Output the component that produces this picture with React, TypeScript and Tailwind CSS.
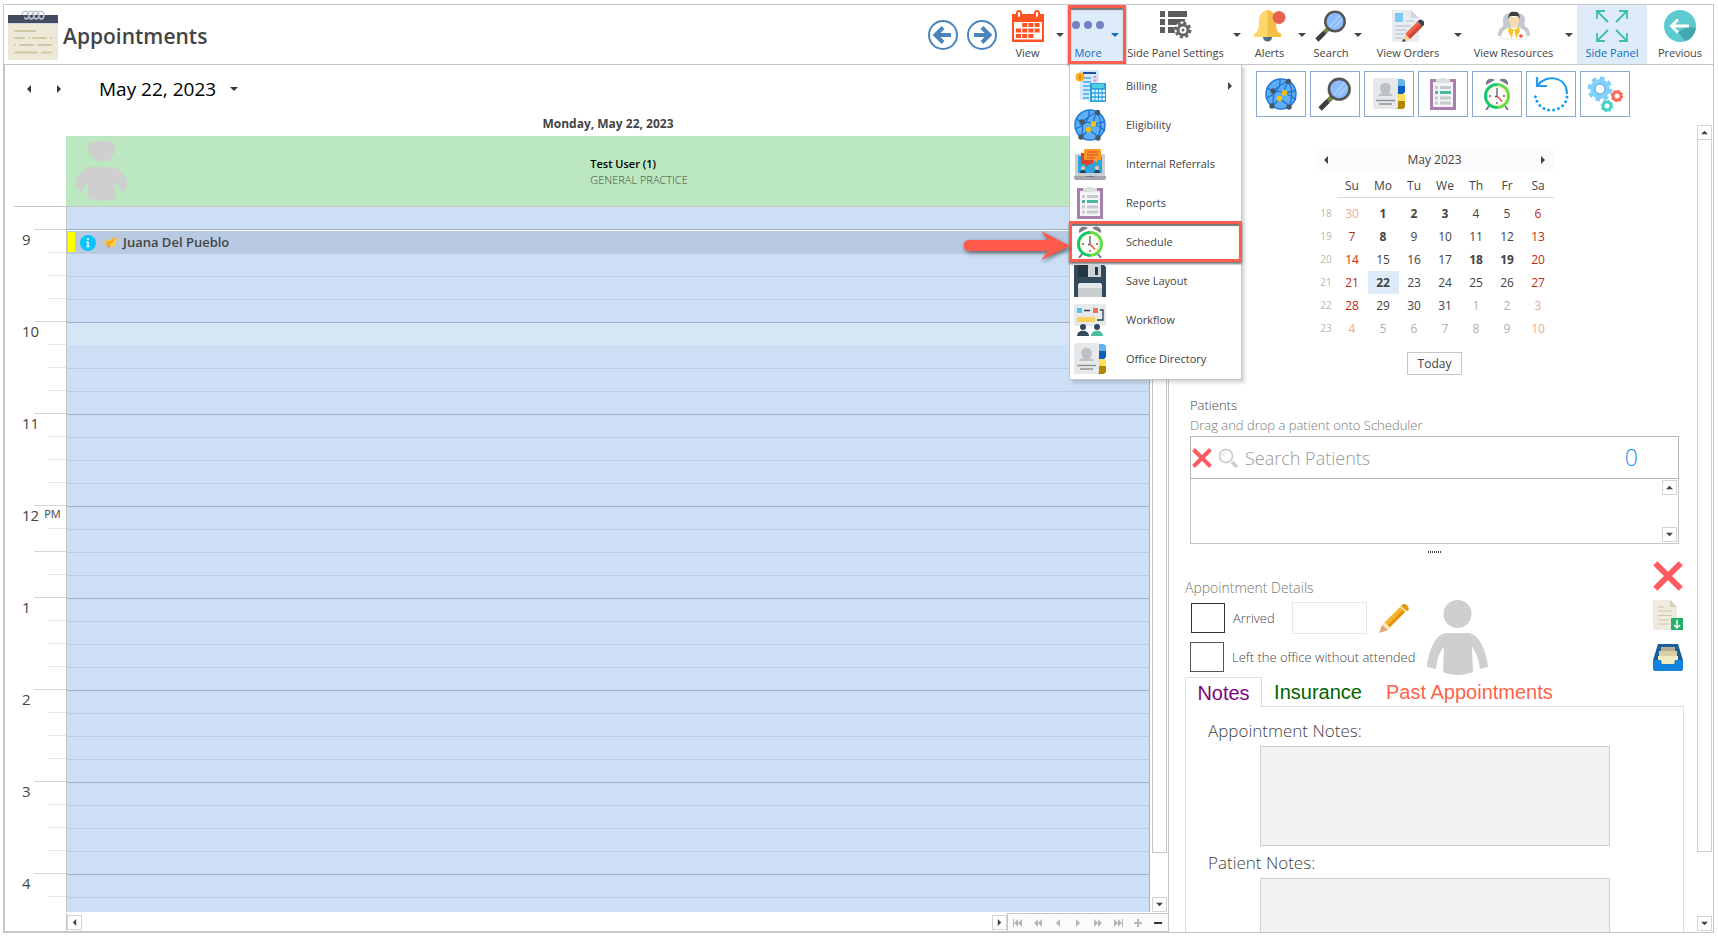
import type { ReactNode } from "react";
import clsx from "clsx";

type Dir = "up" | "down" | "left" | "right";

const ARROWS: Record<Dir, string> = {
  up: "M0 6L4 2l4 4z",
  down: "M0 2h8L4 6z",
  left: "M6 0v8L2 4z",
  right: "M2 0l4 4-4 4z",
};

const Arrow = ({ dir, className = "" }: { dir: Dir; className?: string }) => (
  <svg
    viewBox="0 0 8 8"
    className={clsx("size-2 shrink-0", className)}
    fill="currentColor"
    aria-hidden="true"
  >
    <path d={ARROWS[dir]} />
  </svg>
);

const Svg = ({
  children,
  className = "size-8",
  box = "0 0 32 32",
}: {
  children: ReactNode;
  className?: string;
  box?: string;
}) => (
  <svg
    viewBox={box}
    className={clsx("shrink-0", className)}
    fill="none"
    aria-hidden="true"
  >
    {children}
  </svg>
);

/* ---------- icons ---------- */

const NotepadIcon = () => (
  <Svg className="h-[50px] w-[50px]" box="0 0 50 50">
    <path fill="#ece9d8" d="M0 5h50v45H0z" />
    <path fill="#434c63" d="M0 5h50v8H0z" />
    <path fill="#d8d8dc" d="M0 13h50v1H0z" />
    <g stroke="#c3c8cf" strokeWidth="1.5">
      <path d="M14 5c0-5 7-5 7 0 0 5-5 5-4 2M19 5c0-5 7-5 7 0 0 5-5 5-4 2M24 5c0-5 7-5 7 0 0 5-5 5-4 2M29 5c0-5 7-5 7 0 0 5-5 5-4 2" />
    </g>
    <path
      stroke="#d1c9a5"
      strokeWidth="2"
      strokeLinecap="round"
      d="M7 21h20M7 28h9M21 28h0M25 28h13M43 28h0M7 35h0M12 35h13M30 35h13M7 42.500h22M34 42.500h9"
    />
  </Svg>
);

const CircleArrowIcon = ({ flip }: { flip?: boolean }) => (
  <Svg className={clsx("size-[30px]", flip && "rotate-180")} box="0 0 30 30">
    <circle cx="15" cy="15" r="14" stroke="#4a84bd" strokeWidth="2" />
    <path
      d="M23 15H8M15 7.500L7.500 15l7.500 7.500"
      stroke="#4a84bd"
      strokeWidth="4"
    />
  </Svg>
);

const CalendarIcon = () => (
  <Svg>
    <path fill="#ff5323" d="M0 4h32v28H0z" />
    <path fill="#fff" d="M2 12h28v17.500H2z" />
    <g fill="#fff" stroke="#ff5323" strokeWidth="2">
      <rect x="5" y="1" width="4" height="7" rx="2" />
      <rect x="23" y="1" width="4" height="7" rx="2" />
    </g>
    <path
      stroke="#ff5323"
      strokeWidth="4"
      strokeDasharray="5 1.200"
      d="M10.200 15H28M4 20.500h24M4 26h17.400"
    />
  </Svg>
);

const DotsIcon = () => (
  <Svg>
    <g fill="#7482c3">
      <circle cx="4" cy="15" r="4" />
      <circle cx="16" cy="15" r="4" />
      <circle cx="28" cy="15" r="4" />
    </g>
  </Svg>
);

const ListGearIcon = () => (
  <Svg>
    <path
      fill="#5c5c5c"
      d="M0 1h5v6H0zM8 1h19v6H8zM0 9h5v6H0zM8 9h17v6H8zM0 17h5v6H0zM8 17h9v6H8z"
    />
    <circle cx="23" cy="20" r="8.500" fill="#fff" />
    <circle
      cx="23"
      cy="20"
      r="7"
      stroke="#666"
      strokeWidth="3"
      strokeDasharray="3 2.500"
    />
    <circle cx="23" cy="20" r="5" stroke="#666" strokeWidth="3" />
    <circle cx="23" cy="20" r="1.500" fill="#666" />
  </Svg>
);

const BellIcon = () => (
  <Svg>
    <path fill="#4f6d84" d="M9 27h9c0 6-9 6-9 0z" />
    <path
      fill="#ffd66b"
      d="M11 1c1-1.500 4-1.500 5 0 5 2 6 6 6 11 0 7 1 10 5 12v3H0v-3c4-2 5-5 5-12 0-5 1-9 6-11z"
    />
    <path
      fill="#f5bf45"
      d="M13.500 0c1 0 2 .3 2.500 1 5 2 6 6 6 11 0 7 1 10 5 12v3H13.500z"
    />
    <circle cx="25" cy="7.500" r="6.500" fill="#e8614f" />
  </Svg>
);

const SearchIcon = ({ className }: { className?: string }) => (
  <Svg className={className}>
    <path d="M14 18L2 30" stroke="#505050" strokeWidth="4" />
    <path d="M13 19l-3 3" stroke="#6f8f3c" strokeWidth="4" />
    <path d="M2 30l7-7" stroke="#3e3e3e" strokeWidth="4.500" />
    <circle
      cx="20"
      cy="11.500"
      r="9.700"
      fill="#8cbcfb"
      stroke="#555"
      strokeWidth="2.500"
    />
    <path d="M15 17L25 5M19 18l8-9" stroke="#abd0ff" strokeWidth="1.500" />
  </Svg>
);

const OrdersIcon = () => (
  <Svg>
    <path fill="#e9edf1" d="M0 0h19l8 8v24H0z" />
    <path fill="#cfd8e0" d="M19 0l8 8h-8z" />
    <path fill="#7bc8f5" d="M3 3h8v9H3z" />
    <path
      stroke="#c3ced8"
      strokeWidth="1.500"
      d="M14 11h8M3 16h16M3 20h12M3 24h9M3 28h7"
    />
    <path fill="#f1644b" d="M25.500 11.500l5 5L18 29l-5-5z" />
    <path fill="#d24a35" d="M28 14l2.500 2.500L18 29l-2.500-2.500z" />
    <path fill="#3c4450" d="M27 10c2-2 7 2 5 5l-1.500 1.500-5-5z" />
    <path fill="#f6cfa3" d="M13 24l5 5-7 3z" />
    <path fill="#3c4450" d="M11.500 28.500l2.500 2.500-4 1z" />
  </Svg>
);

const ResourcesIcon = () => (
  <Svg>
    <g fill="#c3c9ce">
      <path d="M6 6c6-6 9 0 8 6l-1 5H5c1-4-1-8 1-11zM26 6c-6-6-9 0-8 6l1 5h8c-1-4 1-8-1-11z" />
      <path d="M0 26c0-8 5-11 10-10l3 10zM32 26c0-8-5-11-10-10l-3 10z" />
    </g>
    <path fill="#fff" stroke="#e4e7ea" d="M3 29c0-9 6-12 13-12s13 3 13 12z" />
    <path fill="#f7c52d" d="M11 17l5 3 5-3 1 4-4 8h-4l-4-8z" />
    <path fill="#fff" d="M15.300 21h1.400l1.500 8h-4.400z" />
    <path fill="#f9d9b0" d="M11 7h10c0 7-2 11-5 11S11 14 11 7z" />
    <path fill="#3d3d42" d="M10.500 9C10 3 13 1 16 2c4-1 6 2 5.500 7L20 6h-8z" />
    <path d="M23 24v4M21 26h4" stroke="#e8563f" strokeWidth="1.300" />
  </Svg>
);

const ExpandIcon = () => (
  <Svg>
    <path
      stroke="#41bfa5"
      strokeWidth="1.800"
      d="M1 9V1h8M1 1l11 11M23 1h8v8M31 1L20 12M1 23v8h8M1 31l11-11M31 23v8h-8M31 31L20 20"
    />
  </Svg>
);

const PreviousIcon = () => (
  <Svg>
    <circle cx="16" cy="16" r="16" fill="#5dcad1" />
    <path fill="#42a8ae" d="M14 22l9-5 9 1c-1 6-5 12-11 13z" />
    <path
      d="M25 16H8M14 9.500L7.500 16l6.500 6.500"
      stroke="#fff"
      strokeWidth="3"
    />
  </Svg>
);

const BillingIcon = () => (
  <Svg>
    <path fill="#d6e8fc" d="M6 0h19v30H6z" />
    <path fill="#27509b" d="M9 2h13v2H9z" />
    <path
      stroke="#5fbcf5"
      strokeWidth="2"
      d="M9 8h8M9 12h8M9 16h8M9 20h8M9 24h6M9 28h6"
    />
    <path stroke="#f68aa8" strokeWidth="3" strokeDasharray="2 1.500" d="M21 6v9" />
    <circle cx="6" cy="7" r="4.500" fill="#fbaf1b" />
    <path d="M6 4.500v5" stroke="#d97908" strokeWidth="1.500" />
    <path fill="#2b9fe0" d="M16 13h16v19H16z" />
    <path fill="#4fd0e0" d="M18 14h12v4H18z" />
    <path
      stroke="#e6f6ff"
      strokeWidth="2.500"
      strokeDasharray="2.500 1"
      d="M18 21h13M18 25h13M18 29h13"
    />
  </Svg>
);

const GlobeIcon = () => (
  <Svg>
    <circle cx="16" cy="16" r="15" fill="#5daef5" stroke="#2579d8" strokeWidth="1.500" />
    <path
      stroke="#1b6dcc"
      strokeWidth="1.200"
      d="M23 3C20 4 18 5 8 13M15 1c1 9-3 15-14 19M23 3c6 9 4 18 1 26M8 13c1 8 1 11-1 15M8 13c8 0 16 2 23 9M14.500 20.500C12 24 10 26 7 28M14.500 20.500c4 3 7 4 9.500 8M19.500 15c0-5 1-8 4-12M19.500 15c5-1 9-1 11-3M2 10l6 3"
    />
    <g fill="#455a64">
      <circle cx="23.500" cy="3.500" r="2.700" />
      <circle cx="8" cy="13" r="2.700" />
      <circle cx="7" cy="28" r="2.700" />
      <circle cx="24" cy="29" r="2.700" />
    </g>
    <circle cx="19.500" cy="15" r="2.700" fill="#ffc107" />
    <circle cx="14.500" cy="20.500" r="2.700" fill="#ffc107" />
  </Svg>
);

const ReferralsIcon = () => (
  <Svg>
    <path fill="#c9ced2" d="M1 6h30v22H1z" />
    <path fill="#2fa3dc" d="M4 8h24v17H4z" />
    <path fill="#a3a7ab" d="M0 28h32v2c0 1-1 2-2 2H2c-1 0-2-1-2-2z" />
    <path fill="#74797d" d="M12 28h8v1h-8z" />
    <path fill="#1d3f63" d="M6 25c0-4 6-4 6 0zM20 25c0-4 6-4 6 0z" />
    <circle cx="9" cy="20" r="2" fill="#f6c79a" />
    <circle cx="23" cy="20" r="2" fill="#f6c79a" />
    <path fill="#d8442e" d="M7 5h12v11h-4l-2 3-2-3H7z" />
    <path fill="#fd9727" d="M11 1h15c1 0 1 1 1 1v10h-3l-1 3-3-3h-9s-1 0-1-1V2z" />
    <path stroke="#d8442e" strokeWidth="1.200" d="M13 4h11M13 7h11M13 10h8" />
  </Svg>
);

const ReportsIcon = () => (
  <Svg>
    <path fill="#a97fad" d="M3 1h26v31H3z" />
    <path fill="#f3f5f5" d="M6 4h20v25H6z" />
    <path fill="#dadfe0" d="M9 1h4V0h6v1h4v4H9z" />
    <path stroke="#c4cacd" strokeWidth="3" d="M8 9.500h3M13 9.500h11M8 20h3M13 20h11M8 25h3M13 25h11" />
    <path stroke="#4db6a0" strokeWidth="3" d="M8 14.500h3M13 14.500h11" />
  </Svg>
);

const ClockIcon = () => (
  <Svg>
    <path fill="#7d7b8c" d="M5 7C4 2 9-1 14 2zM27 7c1-5-4-8-9-5z" />
    <path d="M8 28l-3 4M24 28l3 4" stroke="#77758a" strokeWidth="2" />
    <circle cx="16" cy="18" r="11.500" fill="#fff" />
    <path d="M16 6.500a11.500 11.500 0 000 23" stroke="#0cc872" strokeWidth="3" />
    <path d="M16 6.500a11.500 11.500 0 010 23" stroke="#5fde4a" strokeWidth="3" />
    <circle cx="16" cy="18" r="9.500" stroke="#fde9b8" strokeWidth="1.200" />
    <path
      d="M16 10v2M16 24v2M8 18h2M22 18h2M16 12v6.500h-2"
      stroke="#5b5b6e"
      strokeWidth="1.300"
    />
    <path d="M16 18l5 5.500" stroke="#f0533a" strokeWidth="1.600" />
  </Svg>
);

const FloppyIcon = () => (
  <Svg>
    <path fill="#324a5b" d="M0 0h30l2 2v30H0z" />
    <path fill="#243642" d="M4 0h10v12H4z" />
    <path fill="#ccd1d5" d="M14 0h13v12H14z" />
    <path fill="#243642" d="M21 2h3v8h-3z" />
    <path fill="#e4e7e7" d="M4 20l1-2h22l1 2v5H4z" />
    <path fill="#c8cdcf" d="M4 23h24v9H4z" />
  </Svg>
);

const WorkflowIcon = () => (
  <Svg>
    <rect width="32" height="22" rx="2" fill="#e6e9ea" />
    <path fill="#54c0eb" d="M3 4h5v5H3z" />
    <path fill="#f1705d" d="M19 4h5v5h-5z" />
    <path fill="#ffd05b" d="M3 13h18v5H3z" />
    <path d="M10 6.500h6M26 6h3v10h-6" stroke="#2d4456" strokeWidth="1.300" />
    <circle cx="9" cy="23" r="3" fill="#324a5e" />
    <circle cx="23" cy="23" r="3" fill="#324a5e" />
    <path fill="#324a5e" d="M3 32c0-7 12-7 12 0z" />
    <path fill="#4cbea0" d="M17 32c0-7 12-7 12 0z" />
  </Svg>
);

const DirectoryIcon = () => (
  <Svg>
    <path fill="#64b5e6" d="M24 1h6l2 2v5h-8z" />
    <path fill="#0a5fbf" d="M24 8h8v6l-2 2h-6z" />
    <path fill="#ffdf57" d="M24 16h8v6l-2 1h-6z" />
    <path fill="#b38600" d="M24 23h8v6l-2 2h-6z" />
    <rect width="25" height="31" rx="2" fill="#e7e8e9" />
    <path
      fill="#bdc1c5"
      d="M12.500 5c7 0 6 7 3 10 3 1 4 1 4 3h-14c0-2 1-2 4-3-3-3-4-10 3-10z"
    />
    <path d="M3 22.500h19M6 26h13" stroke="#8e959a" strokeWidth="1.600" />
  </Svg>
);

const RefreshIcon = () => (
  <Svg className="size-9" box="0 0 36 36">
    <path d="M5 9C13-2 34 0 34 18" stroke="#1e9bf0" strokeWidth="2" />
    <path d="M4 1v9h10" stroke="#1e9bf0" strokeWidth="2.200" />
    <path
      d="M34 21C32 38 4 40 2 18"
      stroke="#12a0f5"
      strokeWidth="3"
      strokeLinecap="round"
      strokeDasharray="0 5"
    />
  </Svg>
);

const GearsIcon = () => (
  <Svg className="size-9" box="0 0 36 36">
    <circle cx="13" cy="13" r="10.500" stroke="#7dcdfa" strokeWidth="4" strokeDasharray="4.500 3.700" />
    <circle cx="13" cy="13" r="7.500" stroke="#83d2fd" strokeWidth="5" />
    <circle cx="13" cy="13" r="5" stroke="#3ca4e3" />
    <circle cx="30" cy="20" r="4" stroke="#fb6a56" strokeWidth="3" />
    <circle cx="30" cy="20" r="5.500" stroke="#fb6a56" strokeWidth="1.500" strokeDasharray="2 2.300" />
    <circle cx="20" cy="30" r="4" stroke="#47d3c3" strokeWidth="3" />
    <circle cx="20" cy="30" r="5.500" stroke="#47d3c3" strokeWidth="1.500" strokeDasharray="2 2.300" />
  </Svg>
);

const CrossIcon = ({ className }: { className: string }) => (
  <Svg className={className} box="0 0 20 20">
    <path d="M1.500 1.500l17 17M18.500 1.500l-17 17" stroke="#ff5a5f" strokeWidth="4" />
  </Svg>
);

const LensIcon = () => (
  <Svg className="size-5" box="0 0 20 20">
    <circle cx="8" cy="8" r="6.500" stroke="#d0d0d0" strokeWidth="1.800" />
    <path d="M4.500 8c0-2 1-3 3-3.500" stroke="#ddd" />
    <path d="M14 14l5 5" stroke="#ccc" strokeWidth="3.500" />
  </Svg>
);

const PencilIcon = () => (
  <Svg className="size-[30px]" box="0 0 30 30">
    <path fill="#f5b52e" d="M22 3l5 5L9 26l-5-5z" />
    <path fill="#e09204" d="M25 6l2 2L9 26l-2-2z" />
    <path fill="#fbe9bd" d="M21 4l2-2 6 5-3 2z" />
    <path fill="#e09a0c" d="M23 2c2-3 8 1 6.500 5L28 8l-6-5z" />
    <path fill="#fbe9bd" d="M3 22l2-3 7 6-3 2z" />
    <path fill="#e3a376" d="M3 22l6 5-9 3z" />
  </Svg>
);

const DocumentIcon = () => (
  <Svg className="size-[30px]" box="0 0 30 30">
    <path fill="#efebde" d="M0 0h17l7 7v23H0z" />
    <path fill="#d8d1ba" d="M17 0l7 7h-7z" />
    <path
      stroke="#cdc6ad"
      strokeWidth="1.200"
      d="M5 7h6M5 11h14M5 15.500h14M5 20h11M5 24h11"
    />
    <path fill="#23b067" d="M18 18h12v12H18z" />
    <path d="M24 20v8M21 25l3 3 3-3" stroke="#fff" strokeWidth="1.500" />
  </Svg>
);

const TrayIcon = () => (
  <Svg className="h-[27px] w-[30px]" box="0 0 30 27">
    <path fill="#165f98" d="M5 0h20l5 16v2H0v-2z" />
    <path fill="#b7ad8b" d="M8 3h14v5H8z" />
    <path fill="#d9cfa5" d="M6 7h18v6H6z" />
    <path fill="#f1ebc0" d="M5 12h20v5H5z" />
    <path fill="#1583dc" d="M0 16h8l1 4h12l1-4h8v9c0 1-1 2-2 2H2c-1 0-2-1-2-2z" />
    <path fill="#f1ebc0" d="M8 15h14l-1 5H9z" />
  </Svg>
);

const InfoIcon = () => (
  <Svg className="size-4" box="0 0 16 16">
    <circle cx="8" cy="8" r="8" fill="#0ac5fb" />
    <path d="M8 6.500v5M6.500 7H8M6.500 11.500h3M8 3v2" stroke="#fff" strokeWidth="1.500" />
  </Svg>
);

const PlaneIcon = () => (
  <Svg className="h-3 w-4" box="0 0 16 12">
    <path fill="#fcc33c" d="M0 5L16 0 12 10z" />
    <path fill="#f2a71b" d="M4 6.500L16 0 6 12z" />
    <path fill="#ffce4a" d="M7 8l9-8-4 10z" />
  </Svg>
);

const PersonIcon = () => (
  <Svg className="h-[75px] w-[61px]" box="0 0 61 75">
    <circle cx="30.500" cy="14" r="14" fill="#cfcfcf" />
    <path
      fill="#cfcfcf"
      d="M20 33h21c11 0 19 20 20 34l-8 2c-1-9-4-17-8-22l1 25c-9 4-22 4-30 0l1-25c-5 5-7 13-8 22l-9-2C1 53 8 33 20 33z"
    />
  </Svg>
);

const ProviderIcon = () => (
  <Svg className="h-[60px] w-[53px]" box="0 0 53 60">
    <path
      fill="#cfcfcf"
      d="M13 3c6-4 22-4 27 0 1 11-5 18-13 18S12 14 13 3zM15 26h24c7 2 12 9 14 18l-5 8-8-12 1 16c-6 5-22 5-28 0V40L6 52l-6-8c2-9 8-16 15-18z"
    />
  </Svg>
);

/* ---------- data ---------- */

const menuItems = [
  { label: "Billing", icon: <BillingIcon />, submenu: true },
  { label: "Eligibility", icon: <GlobeIcon /> },
  { label: "Internal Referrals", icon: <ReferralsIcon /> },
  { label: "Reports", icon: <ReportsIcon /> },
  { label: "Schedule", icon: <ClockIcon />, marked: true },
  { label: "Save Layout", icon: <FloppyIcon /> },
  { label: "Workflow", icon: <WorkflowIcon /> },
  { label: "Office Directory", icon: <DirectoryIcon /> },
];

const quickTools = [
  { label: "Eligibility", icon: <GlobeIcon /> },
  { label: "Search", icon: <SearchIcon className="size-[34px]" /> },
  { label: "Office Directory", icon: <DirectoryIcon /> },
  { label: "Reports", icon: <ReportsIcon /> },
  { label: "Schedule", icon: <ClockIcon /> },
  { label: "Refresh", icon: <RefreshIcon /> },
  { label: "Settings", icon: <GearsIcon /> },
];

const weekDays = ["Su", "Mo", "Tu", "We", "Th", "Fr", "Sa"];
const boldDays = [1, 2, 3, 8, 18, 19, 22];
const weeks = [18, 19, 20, 21, 22, 23];

// April 30 is the first cell of the grid
const dayAt = (week: number, col: number) => {
  const n = week * 7 + col;
  if (n === 0) return { day: 30, current: false };
  if (n > 31) return { day: n - 31, current: false };
  return { day: n, current: true };
};

const hours = ["9", "10", "11", "12", "1", "2", "3", "4"];
const slots = Array.from({ length: 31 }, (_, i) => i);

/* ---------- header ---------- */

const ToolButton = ({
  label,
  icon,
  caret,
  className = "",
}: {
  label: string;
  icon: ReactNode;
  caret?: boolean;
  className?: string;
}) => (
  <button type="button" className={clsx("flex h-full items-center", className)}>
    <span className="flex h-full flex-1 flex-col items-center pt-[5px]">
      {icon}
      <span className="mt-[3px] text-[11px] leading-4 whitespace-nowrap">
        {label}
      </span>
    </span>
    {caret && <Arrow dir="down" className="mr-1" />}
  </button>
);

const MoreMenu = () => (
  <div
    role="menu"
    className="absolute top-[59px] left-px z-10 w-[173px] border border-[#c6c6c6] bg-white py-px shadow-[3px_3px_3px_rgba(0,0,0,0.15)]"
  >
    {menuItems.map((item) => (
      <div key={item.label} className="relative">
        <button
          type="button"
          role="menuitem"
          className="flex h-[39px] w-full items-center pr-[7px] pl-1 text-left text-[11px]"
        >
          {item.icon}
          <span className="ml-5 flex-1 pt-px">{item.label}</span>
          {item.submenu && <Arrow dir="right" />}
        </button>
        {item.marked && (
          <>
            <span className="pointer-events-none absolute -inset-x-px -inset-y-px border-[3px] border-[#fb5f50] shadow-[inset_0_2px_1px_#777,0_2px_2px_#777]" />
            <svg
              viewBox="0 0 106 32"
              className="absolute top-2 right-full h-8 w-[106px] drop-shadow-[1px_2px_2px_rgba(0,0,0,0.5)]"
              aria-hidden="true"
            >
              <path
                fill="#ff5a4b"
                d="M5 10h79L77 1l29 15-29 14 7-9H5c-7 0-7-11 0-11z"
              />
            </svg>
          </>
        )}
      </div>
    ))}
  </div>
);

const Header = () => (
  <header className="flex h-[60px] shrink-0 items-center border-b border-[#c6c6c6]">
    <div className="flex flex-1 items-center gap-[5px] pl-1">
      <NotepadIcon />
      <h1 className="pt-1 text-[21px] font-semibold">Appointments</h1>
    </div>
    <div className="flex h-full items-center">
      <div className="mr-[6px] flex gap-[9px]">
        <button type="button" aria-label="Back">
          <CircleArrowIcon />
        </button>
        <button type="button" aria-label="Forward">
          <CircleArrowIcon flip />
        </button>
      </div>
      <ToolButton
        label="View"
        icon={<CalendarIcon />}
        caret
        className="w-[65px] gap-1"
      />
      <div className="relative h-full w-[58px]">
        <button
          type="button"
          aria-haspopup="menu"
          aria-expanded="true"
          className="flex h-full w-full items-center border-[3px] border-[#fb5f50] bg-[#deebf8] pl-px text-[#0f6cbd] shadow-[inset_0_2px_1px_#777,0_2px_2px_#777]"
        >
          <span className="flex h-full flex-col items-center pt-[2px]">
            <DotsIcon />
            <span className="mt-[3px] text-[11px] leading-4">More</span>
          </span>
          <Arrow dir="down" className="ml-[7px]" />
        </button>
        <MoreMenu />
      </div>
      <ToolButton
        label="Side Panel Settings"
        icon={<ListGearIcon />}
        caret
        className="w-[119px] gap-2"
      />
      <ToolButton
        label="Alerts"
        icon={<BellIcon />}
        caret
        className="w-[65px] gap-1"
      />
      <ToolButton
        label="Search"
        icon={<SearchIcon />}
        caret
        className="w-14 gap-[2px]"
      />
      <ToolButton
        label="View Orders"
        icon={<OrdersIcon />}
        caret
        className="w-[100px] gap-1"
      />
      <ToolButton
        label="View Resources"
        icon={<ResourcesIcon />}
        caret
        className="w-[111px] gap-1"
      />
      <ToolButton
        label="Side Panel"
        icon={<ExpandIcon />}
        className="w-[70px] bg-[#deebf8] text-[#0f6cbd]"
      />
      <ToolButton label="Previous" icon={<PreviousIcon />} className="w-[66px]" />
    </div>
  </header>
);

/* ---------- scheduler ---------- */

const ScrollButton = ({ dir, label }: { dir: Dir; label: string }) => (
  <button
    type="button"
    aria-label={label}
    className="flex size-[15px] shrink-0 items-center justify-center border border-[#d4d4d4] bg-white"
  >
    <Arrow dir={dir} className="size-[7px]" />
  </button>
);

const Ruler = () => (
  <div className="w-[61px] shrink-0">
    {slots.map((i) => {
      const hour = i % 4 === 1 ? hours[(i - 1) / 4] : "";
      const long = i % 4 === 0 || i === 14;
      return (
        <div key={i} className="flex h-[23px] flex-col">
          <div className="flex h-[22px] items-start gap-[5px] pl-[17px] text-[15px] leading-[18px]">
            {hour}
            {hour === "12" && <span className="text-[11px] leading-4">PM</span>}
          </div>
          <div
            className={clsx(
              "h-px self-end",
              long ? "w-8 bg-[#d6d6d6]" : "w-[18px] bg-[#e6e6e6]"
            )}
          />
        </div>
      );
    })}
  </div>
);

const RecordButton = ({ label, path, on }: { label: string; path: string; on?: boolean }) => (
  <button
    type="button"
    aria-label={label}
    className={clsx(
      "flex h-full w-5 items-center justify-center",
      on ? "text-[#333]" : "text-[#b5b5b5]"
    )}
  >
    <svg viewBox="0 0 10 8" className="h-2 w-[10px]" fill="currentColor">
      <path d={path} />
    </svg>
  </button>
);

const Scheduler = () => (
  <section className="flex min-w-0 flex-1 flex-col border-r border-b border-l border-[#c6c6c6]">
    <div className="flex h-[47px] shrink-0 items-center pl-4">
      <button type="button" aria-label="Previous day" className="p-1">
        <Arrow dir="left" className="text-[#333]" />
      </button>
      <button type="button" aria-label="Next day" className="ml-[14px] p-1">
        <Arrow dir="right" className="text-[#333]" />
      </button>
      <button type="button" className="ml-8 flex items-center gap-[14px] text-black">
        <span className="text-[19px] leading-6">May 22, 2023</span>
        <Arrow dir="down" className="text-[#333]" />
      </button>
    </div>
    <div className="flex h-6 shrink-0 items-center justify-center pr-[18px] pl-[61px] text-xs font-bold">
      Monday, May 22, 2023
    </div>
    <div className="flex h-[71px] shrink-0">
      <div className="ml-[9px] w-[52px] border-b border-[#c6c6c6]" />
      <div className="mr-[18px] flex flex-1 items-center border-b border-[#c6c6c6] bg-[#bbe8c0] pl-[9px]">
        <ProviderIcon />
        <div className="flex flex-1 justify-center pt-px">
          <div className="text-[11px] leading-4">
            <div className="font-semibold text-black">Test User (1)</div>
            <div className="font-light">GENERAL PRACTICE</div>
          </div>
        </div>
      </div>
    </div>
    <div className="flex min-h-0 flex-1">
      <div className="flex min-w-0 flex-1 overflow-hidden">
        <Ruler />
        <div className="flex-1 border-r border-l border-r-[#9fb3cf] border-l-[#c6c6c6]">
          {slots.map((i) => (
            <div
              key={i}
              className={clsx(
                "h-[23px] border-b",
                i === 5 && "border-b-[#cddff5] bg-[#d7e6f6]",
                i !== 5 && "bg-[#cddff5]",
                i !== 5 && i % 4 === 0 && "border-[#9db1c9]",
                i !== 5 && i % 4 !== 0 && "border-[#bccddf]"
              )}
            >
              {i === 1 && (
                <button
                  type="button"
                  className="mt-px flex h-[22px] w-full items-center bg-[#b7cae2] pl-px text-[13px] font-semibold"
                >
                  <span className="h-5 w-[7px] bg-[#ffff00]" />
                  <span className="ml-[5px] flex items-center gap-[6px] pt-[2px]">
                    <InfoIcon />
                    <PlaneIcon />
                    <span className="-ml-px">Juana Del Pueblo</span>
                  </span>
                </button>
              )}
            </div>
          ))}
        </div>
      </div>
      <div className="flex w-[18px] flex-col items-center pl-px">
        <div className="w-[15px] flex-1 border border-[#c6c6c6] bg-white" />
        <div className="h-11" />
        <ScrollButton dir="down" label="Scroll down" />
      </div>
    </div>
    <div className="mt-px flex h-[18px] shrink-0 items-center pl-[61px]">
      <div className="flex h-full flex-1 items-center justify-between border-l border-[#c6c6c6]">
        <ScrollButton dir="left" label="Scroll left" />
        <ScrollButton dir="right" label="Scroll right" />
      </div>
      <div className="flex h-full border-t border-l border-[#c6c6c6] bg-[#fbfbfb]">
        <RecordButton label="First" path="M0 0h1v8H0zM5 0v8L1 4zM9 0v8L5 4z" />
        <RecordButton label="Previous page" path="M5 0v8L1 4zM9 0v8L5 4z" />
        <RecordButton label="Previous record" path="M7 0v8L3 4z" />
        <RecordButton label="Next record" path="M3 0v8l4-4z" />
        <RecordButton label="Next page" path="M1 0v8l4-4zM5 0v8l4-4z" />
        <RecordButton label="Last" path="M1 0v8l4-4zM5 0v8l4-4zM9 0h1v8H9z" />
        <RecordButton label="Add" path="M1 3h3V0h2v3h3v2H6v3H4V5H1z" />
        <RecordButton label="Remove" path="M1 3h8v2H1z" on />
      </div>
    </div>
  </section>
);

/* ---------- side panel ---------- */

const MonthCalendar = () => (
  <div className="mx-auto flex w-[238px] flex-col items-center">
    <div className="flex h-[22px] w-full items-center justify-between bg-[#fbfbfb] px-[6px] text-xs text-[#444]">
      <button type="button" aria-label="Previous month">
        <Arrow dir="left" />
      </button>
      <span>May 2023</span>
      <button type="button" aria-label="Next month">
        <Arrow dir="right" />
      </button>
    </div>
    <table className="w-full table-fixed border-collapse text-center text-xs">
      <thead>
        <tr className="h-[31px] align-top leading-[24px]">
          <th className="w-[21px]" />
          {weekDays.map((d) => (
            <th key={d} className="p-0 font-normal">
              <div className="h-[27px] border-b border-[#d8d8d8] pt-[3px]">{d}</div>
            </th>
          ))}
        </tr>
      </thead>
      <tbody>
        {weeks.map((week, w) => (
          <tr key={week} className="h-[23px]">
            <td className="p-0 text-[10px] text-[#b8b8b8]">{week}</td>
            {weekDays.map((d, col) => {
              const { day, current } = dayAt(w, col);
              const weekend = col === 0 || col === 6;
              return (
                <td
                  key={d}
                  className={clsx(
                    "p-0",
                    current && boldDays.includes(day) && "font-bold",
                    current && day === 22 && "bg-[#deebf8]",
                    weekend && (current ? "text-[#c22b10]" : "text-[#eba99d]"),
                    !weekend && !current && "text-[#b0b0b0]"
                  )}
                >
                  {day}
                </td>
              );
            })}
          </tr>
        ))}
      </tbody>
    </table>
    <button
      type="button"
      className="mt-3 h-[23px] w-[55px] border border-[#c6c6c6] bg-[#fdfdfd] text-xs"
    >
      Today
    </button>
  </div>
);

const Patients = () => (
  <div className="mx-[5px] mt-5 font-light">
    <h2 className="text-[13px] leading-5">Patients</h2>
    <p className="text-[13px] leading-5 text-[#777]">
      Drag and drop a patient onto Scheduler
    </p>
    <div className="mt-px flex h-[43px] items-center border border-[#b8b8b8] pl-px">
      <button type="button" aria-label="Clear search">
        <CrossIcon className="size-5" />
      </button>
      <span className="ml-[6px]">
        <LensIcon />
      </span>
      <input
        type="text"
        aria-label="Search patients"
        placeholder="Search Patients"
        className="ml-[7px] min-w-0 flex-1 pt-[2px] text-[18px] font-light outline-none placeholder:text-[#999]"
      />
      <span className="mr-10 text-[23px] text-[#1e8fff]">0</span>
    </div>
    <div className="flex h-[65px] flex-col items-end justify-between border border-t-0 border-[#c6c6c6] p-px">
      <ScrollButton dir="up" label="Scroll patients up" />
      <ScrollButton dir="down" label="Scroll patients down" />
    </div>
    <div className="mx-auto mt-[7px] flex w-[14px] justify-between">
      {slots.slice(0, 7).map((i) => (
        <span key={i} className="h-[2px] w-px bg-[#444]" />
      ))}
    </div>
  </div>
);

const AppointmentDetails = () => (
  <div className="mt-2 flex h-[116px] items-start font-light">
    <div className="pt-[17px]">
      <h2 className="text-sm leading-5 text-[#777]">Appointment Details</h2>
      <div className="mt-1 flex h-8 items-center pl-[6px]">
        <input
          id="arrived"
          type="checkbox"
          className="h-[30px] w-[34px] appearance-none border border-[#333] bg-white"
        />
        <label htmlFor="arrived" className="ml-2 w-[59px] pt-[2px] text-[13px]">
          Arrived
        </label>
        <input
          type="text"
          aria-label="Arrival time"
          className="h-8 w-[75px] border border-[#e6e6e6]"
        />
        <button type="button" aria-label="Edit arrival" className="ml-3">
          <PencilIcon />
        </button>
      </div>
      <div className="mt-[7px] flex h-8 items-center pl-[5px]">
        <input
          id="left-office"
          type="checkbox"
          className="h-[30px] w-[34px] appearance-none border border-[#555] bg-white"
        />
        <label
          htmlFor="left-office"
          className="ml-2 pt-[2px] text-[13px] whitespace-nowrap"
        >
          Left the office without attended
        </label>
      </div>
    </div>
    <div className="mt-[39px] ml-3">
      <PersonIcon />
    </div>
    <div className="mr-px ml-auto flex flex-col">
      <button type="button" aria-label="Delete appointment">
        <CrossIcon className="size-[30px]" />
      </button>
      <button type="button" aria-label="Download document" className="mt-[9px]">
        <DocumentIcon />
      </button>
      <button type="button" aria-label="Archive" className="mt-[14px]">
        <TrayIcon />
      </button>
    </div>
  </div>
);

const NotesTabs = () => (
  <div className="flex min-h-0 flex-1 flex-col">
    <div
      role="tablist"
      className="flex h-[30px] shrink-0 font-['Liberation_Sans',Arial,sans-serif] text-[20px] leading-7"
    >
      <button
        type="button"
        role="tab"
        aria-selected="true"
        className="w-[77px] border border-b-0 border-[#dcdcdc] text-[#800080]"
      >
        Notes
      </button>
      <button
        type="button"
        role="tab"
        aria-selected="false"
        className="w-28 border-b border-[#dcdcdc] text-[#006400]"
      >
        Insurance
      </button>
      <button
        type="button"
        role="tab"
        aria-selected="false"
        className="flex-1 border-b border-[#dcdcdc] pl-3 text-left text-[#ff6347]"
      >
        Past Appointments
      </button>
    </div>
    <div className="min-h-0 flex-1 overflow-hidden border-x border-[#dcdcdc] pt-3 pl-[22px] text-[17px] leading-6 font-light">
      <label htmlFor="appointment-notes">Appointment Notes:</label>
      <textarea
        id="appointment-notes"
        className="mt-[3px] mb-[5px] ml-[52px] block h-[100px] w-[350px] resize-none border border-[#cfcfcf] bg-[#f2f2f2]"
      />
      <label htmlFor="patient-notes">Patient Notes:</label>
      <textarea
        id="patient-notes"
        className="mt-[3px] ml-[52px] block h-[100px] w-[350px] resize-none border border-[#cfcfcf] bg-[#f2f2f2]"
      />
    </div>
  </div>
);

const SidePanel = () => (
  <aside className="flex w-[544px] shrink-0 flex-col">
    <div className="flex shrink-0 gap-1 pt-[6px] pb-2 pl-[87px]">
      {quickTools.map((tool) => (
        <button
          key={tool.label}
          type="button"
          aria-label={tool.label}
          className="flex h-[46px] w-[50px] items-center justify-center border border-[#8ba9cf] bg-white"
        >
          {tool.icon}
        </button>
      ))}
    </div>
    <div className="flex min-h-0 flex-1">
      <div className="flex min-w-0 flex-1 flex-col pt-6 pr-[13px] pl-4">
        <MonthCalendar />
        <Patients />
        <AppointmentDetails />
        <NotesTabs />
      </div>
      <div className="mr-px flex w-[15px] flex-col pb-px">
        <ScrollButton dir="up" label="Scroll panel up" />
        <div className="flex-1 border border-t-0 border-[#cfcfcf]" />
        <div className="h-16" />
        <ScrollButton dir="down" label="Scroll panel down" />
      </div>
    </div>
  </aside>
);

const App = () => (
  <div className="flex h-screen flex-col bg-white pt-1 pr-1 pb-1 pl-[3px] font-['Open_Sans','Noto_Sans',sans-serif] text-[#444]">
    <div className="flex min-h-0 flex-1 flex-col border border-[#c6c6c6]">
      <Header />
      <main className="flex min-h-0 flex-1">
        <Scheduler />
        <SidePanel />
      </main>
    </div>
  </div>
);

export default App;
